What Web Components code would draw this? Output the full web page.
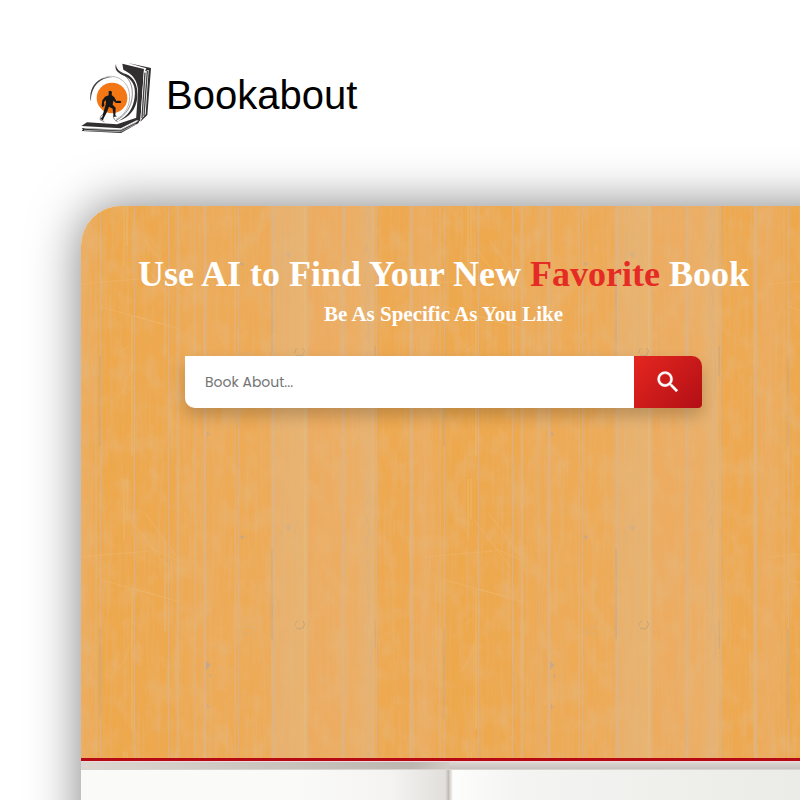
<!DOCTYPE html>
<html lang="en">
<head>
<meta charset="utf-8">
<meta name="viewport" content="width=device-width, initial-scale=1">
<title>Bookabout</title>
<style>
body {
	margin: 0;
	background: #fff;
	font-family: "Liberation Serif", "Times New Roman", serif;
	overflow-x: hidden;
}
</style>
</head>
<body>
<book-app></book-app>

<script>
/**
 * @param {string} name
 * @param {string} html
 */
function define(name, html) {
	const template = document.createElement("template");
	template.innerHTML = html;
	customElements.define(
		name,
		class extends HTMLElement {
			constructor() {
				super();
				const root = this.attachShadow({ mode: "open" });
				root.append(template.content.cloneNode(true));
			}
		},
	);
}

define("book-logo", `
<style>
:host {
	display: block;
}

a {
	display: flex;
	align-items: center;
	gap: 15px;
	color: #000;
	font: 40px/64px "Liberation Sans", Arial, sans-serif;
	text-decoration: none;
}

svg {
	width: 70px;
	height: 70px;
	flex: none;
}

span {
	padding-bottom: 6px;
}
</style>
<a href="#">
	<svg viewBox="33 24 210 210" aria-hidden="true">
		<circle cx="126" cy="129" r="46" fill="#f47716"/>
		<path d="M62 137C58 95 88 65 124 64C158 66 178 91 179 124C179 156 163 181 139 192" fill="none" stroke="#999" stroke-width="2"/>
		<path d="M62 137C56 88 91 62 128 67C91 67 65 92 62 137Z" fill="#444"/>
		<path d="M138 27C132 43 143 55 162 62C188 72 198 94 194 126C190 160 174 184 145 198C178 188 199 163 202 126C205 91 192 66 167 57C149 51 138 42 138 27Z" fill="#322f30"/>
		<path d="M147 50C169 63 188 78 187 119C185 157 166 182 137 197" fill="none" stroke="#555" stroke-width="2"/>
		<path d="M157 26L222 42L211 199L198 195L204 111C204 78 190 59 160 44Z" fill="#322f30"/>
		<path d="M222 42L231 35L224 193L211 199Z" fill="#fff"/>
		<path d="M174 24L243 39L232 180L211 200L215 191L227 178L236 45L225 49L229 40Z" fill="#322f30"/>
		<path d="M232 48L222 183M225 53L216 189" fill="none" stroke="#444" stroke-width="4"/>
		<path d="M51 202L141 208L197 189L209 191L152 220L34 213Z" fill="#322f30"/>
		<path d="M35 219L151 224L209 196L205 205L153 234L35 228L39 223Z" fill="#322f30"/>
		<path d="M43 220L151 225L200 201M42 226L152 230L198 207" fill="none" stroke="#ddd" stroke-width="2"/>
		<path d="M91 195C84 183 92 176 104 166L112 171L97 191L119 202L110 205Z" fill="#fff"/>
		<path d="M108 170C94 179 89 187 91 195L103 200" fill="none" stroke="#555" stroke-width="2"/>
		<path d="M130 181C129 191 136 197 143 200" fill="none" stroke="#444" stroke-width="2"/>
		<path d="M116 109L122 107L126 111L125 120L133 127L139 138L147 137L154 139L152 144L138 144L130 137L128 149L137 158L136 181L141 184L131 186L128 161L117 155L111 171L101 190L99 196L91 192L97 185L102 166L107 149L108 135L102 141L103 153L97 157L95 151L97 136L105 125L116 121Z" fill="#171717"/>
	</svg>
	<span>Bookabout</span>
</a>
`);

define("wood-planks", `
<style>
:host {
	display: block;
}

svg {
	display: block;
	width: 100%;
	height: 100%;
}
</style>
<svg aria-hidden="true">
	<defs>
		<linearGradient id="tone">
			<stop offset="0" stop-color="#ecad62"/>
			<stop offset=".06" stop-color="#eea84c"/>
			<stop offset=".25" stop-color="#eea84d"/>
			<stop offset=".35" stop-color="#edab59"/>
			<stop offset=".45" stop-color="#eeaa54"/>
			<stop offset=".55" stop-color="#edab59"/>
			<stop offset=".555" stop-color="#eaaf68"/>
			<stop offset=".655" stop-color="#e8b470"/>
			<stop offset=".66" stop-color="#edab5e"/>
			<stop offset=".8" stop-color="#ecae64"/>
			<stop offset=".85" stop-color="#e6b374"/>
			<stop offset=".86" stop-color="#eea950"/>
			<stop offset=".95" stop-color="#eea84f"/>
			<stop offset="1" stop-color="#ecad62"/>
		</linearGradient>
		<!-- ten boards per tile, repeated in both directions -->
		<pattern id="boards" width="344" height="273" patternUnits="userSpaceOnUse">
			<rect width="344" height="273" fill="url(#tone)"/>
			<path d="M19 0V273M53 0V273M87 0V273M123 0V273M157 0V273M191 0V273M261 0V273M295 0V273M329 0V273" transform="translate(.5)" stroke="#d6b18f" stroke-width="1"/>
			<path d="M97 0V273M124 0V273M192 0V273M226 0V273M262 0V273M330 0V273" stroke="#e0b482" stroke-width="3" opacity=".6"/>
			<g stroke="#e2b277" stroke-width="1">
				<path d="M15 0V273M84 62V152M114 0V273M154 0V273M194 0V273M200 0V273M207 0V273M214 0V273M264 0V273M283 0V273M289 0V273M332 0V273"/>
			</g>
			<path d="M191 70V160M294 140V170M19 150V240" stroke="#b39c80" opacity=".6" fill="none"/>
			<path d="M224 0V273M43 0V60M46 0V40M51 110V250" stroke="#e9c07b" opacity=".6" fill="none"/>
			<g fill="none" stroke="#d9b07e" stroke-width="1">
				<path d="M214 147q0-4 3-5M222 142q3 3 0 7q-4 2-7 0" stroke="#bfa380"/>
				<path d="M205 48q2-4 4-2t0 5t-4-3" fill="#d4ae82"/>
				<path d="M203 70C201 54 202 43 208 40C214 45 213 60 217 77M198 80C198 60 201 30 207 25C213 30 217 44 220 65" opacity=".5"/>
				<path d="M159 155C162 145 170 146 175 151M160 160C163 151 168 151 171 158"/>
				<path d="M282 15q8-12 4-24M282 30q9-10 6-26M282 48q8-12 7-28M284 70q6-14 2-33M286 80q5 28 0 52M284 95q7 33 1 62M289 145q4 22 0 42"/>
			</g>
			<path d="M159 56l5 2l-4 2zM125 182l5 4l-5 5zM128 195l3 1l-2 3zM126 225l3 3l-3 2z" fill="#c8a682"/>
			<path d="M50 42L86 88M64 34L96 78M71 70L101 83M0 78L68 72M20 101L81 118M54 110L99 123M40 145l8-5M45 175q8-13 6-24M36 192q8-8 10-17" fill="none" stroke="#eeb66b" stroke-width="1" opacity=".6"/>
		</pattern>
		<filter id="grain" x="0" y="0" width="100%" height="100%" color-interpolation-filters="sRGB">
			<feTurbulence type="fractalNoise" baseFrequency="0.35 0.012" numOctaves="3" seed="7"/>
			<feColorMatrix values="0 0 0 0 .88  0 0 0 0 .72  0 0 0 0 .52  .9 0 0 0 -.42"/>
		</filter>
		<filter id="patches" x="0" y="0" width="100%" height="100%" color-interpolation-filters="sRGB">
			<feTurbulence type="fractalNoise" baseFrequency="0.06 0.04" numOctaves="4" seed="3"/>
			<feColorMatrix values="0 0 0 0 .91  0 0 0 0 .71  0 0 0 0 .46  1.4 0 0 0 -.6"/>
		</filter>
	</defs>
	<rect width="100%" height="100%" fill="url(#boards)"/>
	<rect width="100%" height="100%" filter="url(#patches)"/>
	<rect width="100%" height="100%" filter="url(#grain)"/>
</svg>
`);

define("book-search", `
<style>
:host {
	display: block;
}

form {
	position: relative;
	display: flex;
	height: 52px;
	border-radius: 0 10px 4px 10px;
	box-shadow: 0 8px 16px rgba(0, 0, 0, .2);
}

input {
	box-sizing: border-box;
	flex: 1;
	min-width: 0;
	padding: 0 20px;
	border: 0;
	border-radius: 0 0 0 10px;
	background: #fff;
	color: #333;
	font: 14px/24px Poppins, "Open Sans", sans-serif;
}

input::placeholder {
	color: #757575;
	line-height: 24px;
	opacity: 1;
}

button {
	display: grid;
	place-items: center;
	width: 68px;
	padding: 0;
	border: 0;
	border-radius: 0 10px 4px 0;
	background: linear-gradient(135deg, #e52620, #b20f15);
	cursor: pointer;
}

svg {
	width: 28px;
	height: 28px;
}
</style>
<form>
	<input type="text" aria-label="Book About" placeholder="Book About...">
	<button type="button" aria-label="Search">
		<svg viewBox="0 0 24 24" fill="#fff" stroke="#fff" stroke-width=".3" aria-hidden="true">
			<path d="M15.5 14h-.79l-.28-.27A6.47 6.47 0 0 0 16 9.5 6.5 6.5 0 1 0 9.5 16c1.61 0 3.09-.59 4.23-1.57l.27.28v.79l5 4.99L20.49 19l-4.99-5zm-6 0C7.01 14 5 11.99 5 9.5S7.01 5 9.5 5 14 7.01 14 9.5 11.99 14 9.5 14z"/>
		</svg>
	</button>
</form>
`);

define("book-hero", `
<style>
:host {
	display: grid;
	min-height: 69vh;
	border-bottom: 3px solid #b60914;
}

wood-planks,
.content {
	grid-area: 1 / 1;
}

.content {
	position: relative;
	box-sizing: border-box;
	padding: 46px 75px 40px 0;
	color: #fff;
	text-align: center;
}

book-search {
	max-width: 517px;
	margin: 29px auto 0;
}
</style>
<wood-planks></wood-planks>
<div class="content">
	<slot></slot>
	<book-search></book-search>
</div>
`);

define("open-book", `
<style>
:host {
	display: grid;
	grid-template-columns: 46fr 54fr;
	grid-template-rows: 9px 1fr;
}

.edge {
	border-top: 1px solid #eadcda;
	border-bottom: 1px solid #d8d4d0;
	background: linear-gradient(90deg, #ddd6d1, #beb6b0 90%, #d2cbc6);
}

.edge.right {
	background: linear-gradient(#ded6d3, #c9c1bd);
}

.page {
	background: linear-gradient(90deg, #fafaf8 60%, #f4f3f1 85%, #e1dedb 99%, #bdb6b1);
}

.page.right {
	background: linear-gradient(90deg, #cbc5c1, #fdfdfc 4px, #f4f4f2 16%, #e8e8e4);
}
</style>
<div class="edge"></div>
<div class="edge right"></div>
<div class="page"></div>
<div class="page right"></div>
`);

define("book-app", `
<style>
:host {
	display: flex;
	flex-direction: column;
	min-height: 100vh;
	overflow: hidden;
}

header {
	padding: 63px 81px 73px;
}

/* the panel runs off the right and bottom edges of the page */
main {
	display: flex;
	flex: 1;
	flex-direction: column;
	margin: 0 -81px -81px 81px;
	border-radius: 40px 40px 0 0;
	box-shadow: 0 0 50px rgba(0, 0, 0, .5);
}

book-hero {
	border-radius: 40px 40px 0 0;
	overflow: hidden;
}

open-book {
	flex: 1;
}

h1,
h2 {
	margin: 0;
	font-weight: bold;
}

h1 {
	font-size: 36px;
	line-height: 44px;
}

h1 span {
	color: #e52b25;
}

h2 {
	margin-top: 5px;
	font-size: 21px;
	line-height: 26px;
}
</style>
<header><book-logo></book-logo></header>
<main>
	<book-hero>
		<h1>Use AI to Find Your New <span>Favorite</span> Book</h1>
		<h2>Be As Specific As You Like</h2>
	</book-hero>
	<open-book></open-book>
</main>
`);
</script>
</body>
</html>
